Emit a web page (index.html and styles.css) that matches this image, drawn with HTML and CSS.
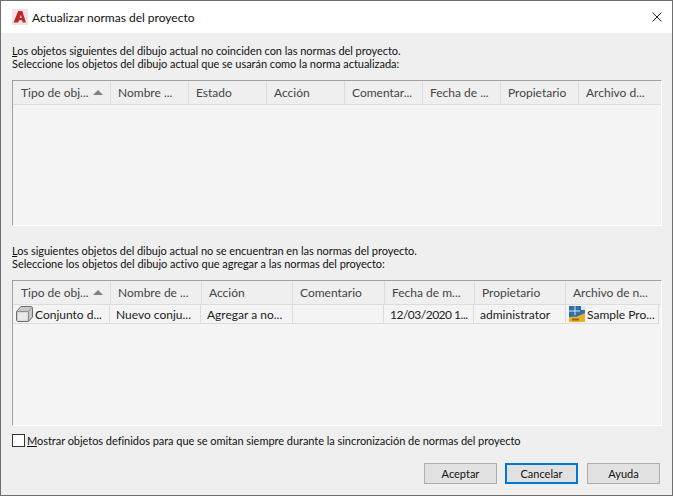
FILE: index.html
```html
<!DOCTYPE html>
<html lang="es">
<head>
<meta charset="utf-8">
<title>Actualizar normas del proyecto</title>
<link rel="stylesheet" href="styles.css">
</head>
<body>
<div class="dialog">
  <header class="titlebar">
    <svg class="logo" width="16" height="16" viewBox="0 0 16 16"><rect width="16" height="16" fill="#f6e3e1"/><path d="M1.500 13.500 6.200 2h4.100l3.600 11.500h-3.200l-.6-2.200H7l-.9 2.200z" fill="#c0272d"/><path d="M7.700 9h2l-.8-3.200z" fill="#f6e3e1"/></svg>
    <span class="title">Actualizar normas del proyecto</span>
    <svg class="close" width="10" height="10" viewBox="0 0 10 10"><path d="M.5.500l9 9M9.500.500l-9 9" stroke="#222" stroke-width="1" fill="none"/></svg>
  </header>
  <main class="content">
    <p class="intro first"><u>L</u>os objetos siguientes del dibujo actual no coinciden con las normas del proyecto.<br>Seleccione los objetos del dibujo actual que se usarán como la norma actualizada:</p>
    <section class="list top-list">
      <div class="row head cols-a">
        <div class="cell sorted"><span>Tipo de obj...</span><i class="arrow"></i></div>
        <div class="cell">Nombre ...</div>
        <div class="cell">Estado</div>
        <div class="cell">Acción</div>
        <div class="cell">Comentar...</div>
        <div class="cell">Fecha de ...</div>
        <div class="cell">Propietario</div>
        <div class="cell">Archivo d...</div>
      </div>
    </section>
    <p class="intro second"><u>L</u>os siguientes objetos del dibujo actual no se encuentran en las normas del proyecto.<br>Seleccione los objetos del dibujo activo que agregar a las normas del proyecto:</p>
    <section class="list bottom-list">
      <div class="row head cols-b">
        <div class="cell sorted"><span>Tipo de obj...</span><i class="arrow"></i></div>
        <div class="cell">Nombre de ...</div>
        <div class="cell">Acción</div>
        <div class="cell">Comentario</div>
        <div class="cell">Fecha de m...</div>
        <div class="cell">Propietario</div>
        <div class="cell">Archivo de n...</div>
      </div>
      <div class="row data cols-d">
        <div class="cell icon-cell">
          <svg width="17" height="16" viewBox="0 0 17 16"><path d="M.5 5.500 5 .5h10.500l1 1V11l-4 4.500H1.500l-1-1z" fill="#c9c9c9" stroke="#707070"/><path d="M1 5.500H12.500V15M12.500 5.500 16 1.500" fill="none" stroke="#8f8f8f"/><path d="M2 6.500H11.500V14.500H2z" fill="#e9e9e9"/></svg>
          <span>Conjunto d...</span>
        </div>
        <div class="cell">Nuevo conju...</div>
        <div class="cell">Agregar a no...</div>
        <div class="cell"></div>
        <div class="cell date">12/03/2020 1...</div>
        <div class="cell">administrator</div>
        <div class="cell file-cell">
          <svg width="16" height="16" viewBox="0 0 16 16"><rect width="16" height="16" fill="#2f6fa8"/><path d="M0 11 8 10.500 16 7V16H0z" fill="#e8ae2e"/><path d="M0 5h11M6 0v9" stroke="#d5e6f4" stroke-width="1"/><path d="M12 0h4v4h-4z" fill="#dfe5ea"/><path d="M3 12.500h7v2H3z" fill="#8a6a1c"/></svg>
          <span>Sample Pro...</span>
        </div>
      </div>
    </section>
    <label class="option"><span class="checkbox"></span><span class="option-text"><u>M</u>ostrar objetos definidos para que se omitan siempre durante la sincronización de normas del proyecto</span></label>
    <footer class="actions">
      <button class="btn" type="button">Aceptar</button>
      <button class="btn default" type="button">Cancelar</button>
      <button class="btn" type="button">Ayuda</button>
    </footer>
  </main>
</div>
</body>
</html>
```
FILE: styles.css
```css
* { box-sizing: border-box; }
html, body { margin: 0; padding: 0; }
body { width: 673px; height: 496px; overflow: hidden; font: 12px/13px "Lato", sans-serif; color: #111; }
.dialog { width: 673px; height: 496px; border: 1px solid #6f6f6f; background: #efefef; display: flex; flex-direction: column; }
.titlebar { height: 32px; background: #fff; display: flex; align-items: center; padding-left: 11px; padding-right: 10px; flex: none; }
.logo { flex: none; }
.title { margin-left: 4px; font-size: 12px; flex: 1; }
.close { flex: none; }
.content { flex: 1; padding: 0 11px; display: flex; flex-direction: column; }
.intro { margin: 0; white-space: nowrap; font-size: 11px; letter-spacing: -.04px; }
.first { margin-top: 11px; }
.second { margin-top: 18px; }
.list { width: 650px; height: 146px; border-style: solid; border-width: 1px; border-color: #a0a0a0 #fff #fff #a0a0a0; background: #f4f4f4; flex: none; }
.top-list { margin-top: 10px; }
.bottom-list { margin-top: 10px; }
.row { display: grid; }
.cols-a { grid-template-columns: 98px repeat(7, 78px); }
.cols-b { grid-template-columns: 98px 91px 91px 92px 90px 91px 92px; }
.cols-d { grid-template-columns: 97px 91px 92px 91px 90px 92px 93px; width: 646px; }
.head { height: 24px; background: #efefef; border-bottom: 1px solid #dcdcdc; }
.cell { white-space: nowrap; overflow: hidden; border-right: 1px solid #dcdcdc; display: flex; align-items: center; padding-left: 7px; color: #222; }
.head .cell { color: #444; }
.head .cell:first-child { padding-left: 8px; }
.head .cell:last-child { border-right: 0; }
.arrow { width: 0; height: 0; border-style: solid; border-width: 0 5px 5px; border-color: transparent transparent #808080; margin-left: 4px; }
.data { height: 19px; border-bottom: 1px solid #dcdcdc; }
.data .cell { padding-left: 6px; }
.data .icon-cell { padding-left: 3px; gap: 2px; }
.data .date { letter-spacing: -.5px; }
.data .file-cell { padding-left: 3px; gap: 2px; }
.option { margin-top: 8px; display: flex; align-items: center; gap: 2px; color: #111; }
.option-text { font-size: 11px; letter-spacing: -.04px; }
.checkbox { width: 13px; height: 13px; background: #fff; border: 1px solid #333; }
.actions { margin-top: 16px; display: flex; justify-content: flex-end; gap: 8px; padding-right: 1px; }
.btn { width: 73px; height: 21px; border: 1px solid #adadad; background: #e1e1e1; font: inherit; font-size: 11px; color: #111; padding: 0; }
.btn.default { border: 2px solid #0078d7; margin-right: 1px; }
```
